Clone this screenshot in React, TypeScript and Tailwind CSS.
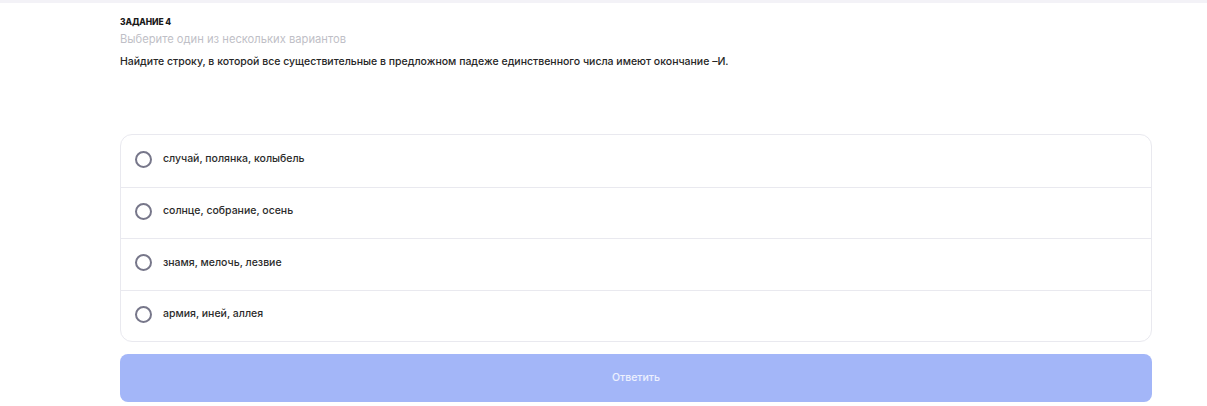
import React, { useState } from 'react';

const options = [
  'случай, полянка, колыбель',
  'солнце, собрание, осень',
  'знамя, мелочь, лезвие',
  'армия, иней, аллея',
];

export default function App() {
  const [selected, setSelected] = useState<number | null>(null);

  return (
    <div className="min-h-screen bg-white font-['Inter',sans-serif]">
      <div className="h-[3px] bg-[#f3f2f7]" />
      <main className="mx-[120px] w-[1032px] pt-[13px]">
        <h2 className="text-[8.5px] font-extrabold uppercase leading-[12px] tracking-[-0.1px] text-[#1a1a1a]">Задание 4</h2>
        <p className="mt-[4px] text-[11.2px] leading-[14px] text-[#bfbfc7]">Выберите один из нескольких вариантов</p>
        <p className="mt-[9px] text-[10.5px] font-medium leading-[14px] text-[#262626]">
          Найдите строку, в которой все существительные в предложном падеже единственного числа имеют окончание –И.
        </p>

        <div className="mt-[65px] overflow-hidden rounded-[12px] border border-[#e9e9ef]">
          {options.map((opt, i) => (
            <label
              key={opt}
              onClick={() => setSelected(i)}
              className={`flex h-[51.5px] cursor-pointer items-center gap-[11px] px-[14px] pb-[3px] ${i > 0 ? 'border-t border-[#e9e9ef]' : ''}`}
            >
              <span className="flex h-[17px] w-[17px] items-center justify-center rounded-full border-[2px] border-[#77778a]">
                {selected === i && <span className="h-[8px] w-[8px] rounded-full bg-[#77778a]" />}
              </span>
              <span className="text-[10.5px] font-medium text-[#2b2b2b]">{opt}</span>
            </label>
          ))}
        </div>

        <button className="mt-[12px] flex h-[48px] w-full items-center justify-center rounded-[8px] bg-[#a3b6f8] text-[10.5px] font-medium text-white/80">
          Ответить
        </button>
      </main>
    </div>
  );
}
